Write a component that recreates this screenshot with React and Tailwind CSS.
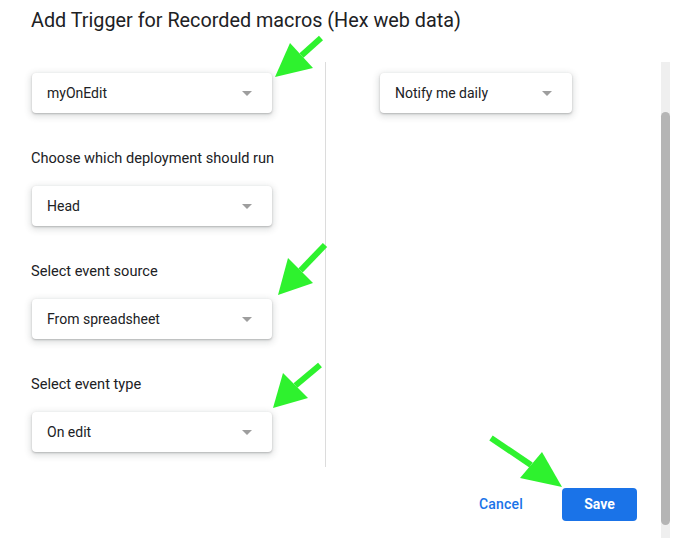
import React from "react";

const Caret = () => (
  <svg width="10" height="5" viewBox="0 0 10 5" className="shrink-0">
    <path d="M0 0 L10 0 L5 5 Z" fill="#9e9e9e" />
  </svg>
);

const Select = ({ value, width = "w-[240px]" }) => (
  <div
    className={`${width} h-[40px] flex items-center justify-between pl-[15px] pr-[20px] bg-white rounded-[4px] shadow-[0_1px_2px_0_rgba(60,64,67,0.3),0_2px_6px_2px_rgba(60,64,67,0.15)]`}
  >
    <span className="text-[14px] text-[#202124] font-['Roboto',sans-serif]">{value}</span>
    <Caret />
  </div>
);

const Label = ({ children }) => (
  <div className="mt-[35px] mb-[18px] h-[20px] leading-[20px] text-[14.6px] text-[#202124] font-['Roboto',sans-serif] -ml-px">
    {children}
  </div>
);

const Arrow = ({ tail, tip, c1, c2 }) => {
  const mid = [(c1[0] + c2[0]) / 2, (c1[1] + c2[1]) / 2];
  return (
    <g>
      <line x1={tail[0]} y1={tail[1]} x2={mid[0]} y2={mid[1]} stroke="#2ef22e" strokeWidth="6" />
      <polygon points={`${tip[0]},${tip[1]} ${c1[0]},${c1[1]} ${c2[0]},${c2[1]}`} fill="#2ef22e" />
    </g>
  );
};

export default function App() {
  return (
    <div className="relative w-[680px] h-[543px] bg-white overflow-hidden flex flex-col">
      <div className="h-[62px] pl-[31px] pt-[7px] text-[19.8px] leading-[28px] text-[#202124] font-['Roboto',sans-serif]">
        Add Trigger for Recorded macros (Hex web data)
      </div>
      <div className="flex h-[476px]">
        <div className="flex-1 flex flex-col">
          <div className="flex h-[405px]">
            <div className="w-[325px] shrink-0 pl-[32px] pt-[11px]">
              <Select value="myOnEdit" />
              <Label>Choose which deployment should run</Label>
              <Select value="Head" />
              <Label>Select event source</Label>
              <Select value="From spreadsheet" />
              <Label>Select event type</Label>
              <Select value="On edit" />
            </div>
            <div className="w-px bg-[#dcdcdc]" />
            <div className="pl-[54px] pt-[11px]">
              <Select value="Notify me daily" width="w-[192px]" />
            </div>
          </div>
          <div className="mt-[21px] h-[33px] flex items-center justify-end gap-[39px] pr-[24px]">
            <span className="text-[14px] font-medium text-[#1a73e8] font-['Roboto',sans-serif] tracking-[0.2px]">Cancel</span>
            <div className="w-[75px] h-[33px] rounded-[4px] bg-[#1a73e8] flex items-center justify-center text-white text-[14px] font-bold font-['Roboto',sans-serif]">
              Save
            </div>
          </div>
        </div>
        <div className="w-[9px] h-full bg-[#efefef] pt-[50px] pb-[13px]">
          <div className="w-full h-full rounded-full bg-[#b5b5b5]" />
        </div>
        <div className="w-[10px]" />
      </div>
      <svg className="absolute inset-0 pointer-events-none" width="680" height="543">
        <Arrow tail={[321, 38]} tip={[275, 77]} c1={[290, 43]} c2={[313, 68]} />
        <Arrow tail={[325, 245]} tip={[278, 295]} c1={[288, 258]} c2={[313, 283]} />
        <Arrow tail={[320, 365]} tip={[273, 408]} c1={[283, 373]} c2={[308, 398]} />
        <Arrow tail={[491, 438]} tip={[562, 487]} c1={[542, 452]} c2={[520, 478]} />
      </svg>
    </div>
  );
}
